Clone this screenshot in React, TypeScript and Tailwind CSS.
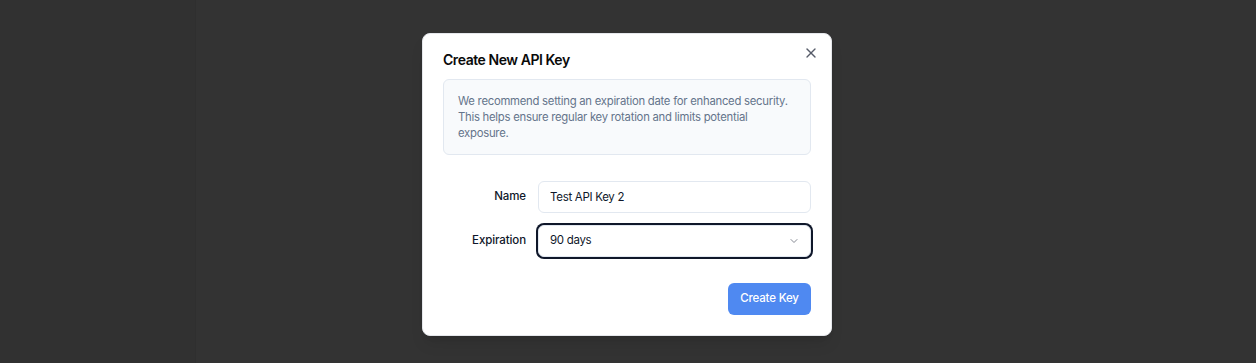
import { X, ChevronDown } from "lucide-react";

const App = () => {
    return (
        <div
            className="relative w-full h-[363px] overflow-hidden"
            style={{ fontFamily: "Inter, 'Noto Sans', sans-serif" }}
        >
            {/* page behind the overlay */}
            <div className="flex h-full">
                <div className="w-[196px] shrink-0 bg-[#313131] border-r border-[#2f2f2f]" />
                <div className="flex-1 bg-[#333333]" />
            </div>

            {/* dialog overlay */}
            <div className="absolute inset-0 flex justify-center items-start pt-[33px] pr-[2px]">
                <div className="relative w-[410px] bg-white rounded-lg border border-[#e5e7eb] px-5 pt-4 pb-5 shadow-lg">
                    <button className="absolute right-3 top-[11px] text-[#0f172a] opacity-70">
                        <X className="h-4 w-4" strokeWidth={2} />
                    </button>
                    <h2 className="text-[14px] leading-5 font-semibold text-[#0a0a0a] tracking-[-0.45px]">
                        Create New API Key
                    </h2>
                    <div className="mt-[9px] rounded-md border border-[#e2e8f0] bg-[#f8fafc] px-[14px] py-[13px]">
                        <p className="text-[11.3px] leading-4 text-[#64748b] tracking-[-0.25px]">
                            We recommend setting an expiration date for enhanced security. This helps ensure regular key rotation and limits potential exposure.
                        </p>
                    </div>
                    <div className="mt-[26px] grid gap-3">
                        <div className="grid grid-cols-4 items-center gap-3">
                            <label className="text-right text-[11.5px] font-medium text-[#0f172a] tracking-[-0.1px]">Name</label>
                            <input
                                readOnly
                                value="Test API Key 2"
                                className="col-span-3 h-8 rounded-md border border-[#e2e8f0] bg-white px-[11px] text-[11.5px] tracking-[-0.3px] text-[#0f172a] outline-none"
                            />
                        </div>
                        <div className="grid grid-cols-4 items-center gap-3">
                            <label className="text-right text-[11.5px] font-medium text-[#0f172a] tracking-[-0.1px]">Expiration</label>
                            <button className="col-span-3 flex h-8 items-center justify-between rounded-md border border-[#e2e8f0] bg-white pl-[11px] pr-[10px] text-[11.5px] tracking-[-0.3px] text-[#0f172a] ring-2 ring-[#0f172a]">
                                <span>90 days</span>
                                <ChevronDown className="h-3 w-3 opacity-50" />
                            </button>
                        </div>
                    </div>
                    <div className="mt-[26px] flex justify-end">
                        <button className="h-8 w-[83px] rounded-md bg-[#4f89f1] text-[11.5px] tracking-[-0.2px] font-medium text-white">
                            Create Key
                        </button>
                    </div>
                </div>
            </div>
        </div>
    );
};

export default App;
